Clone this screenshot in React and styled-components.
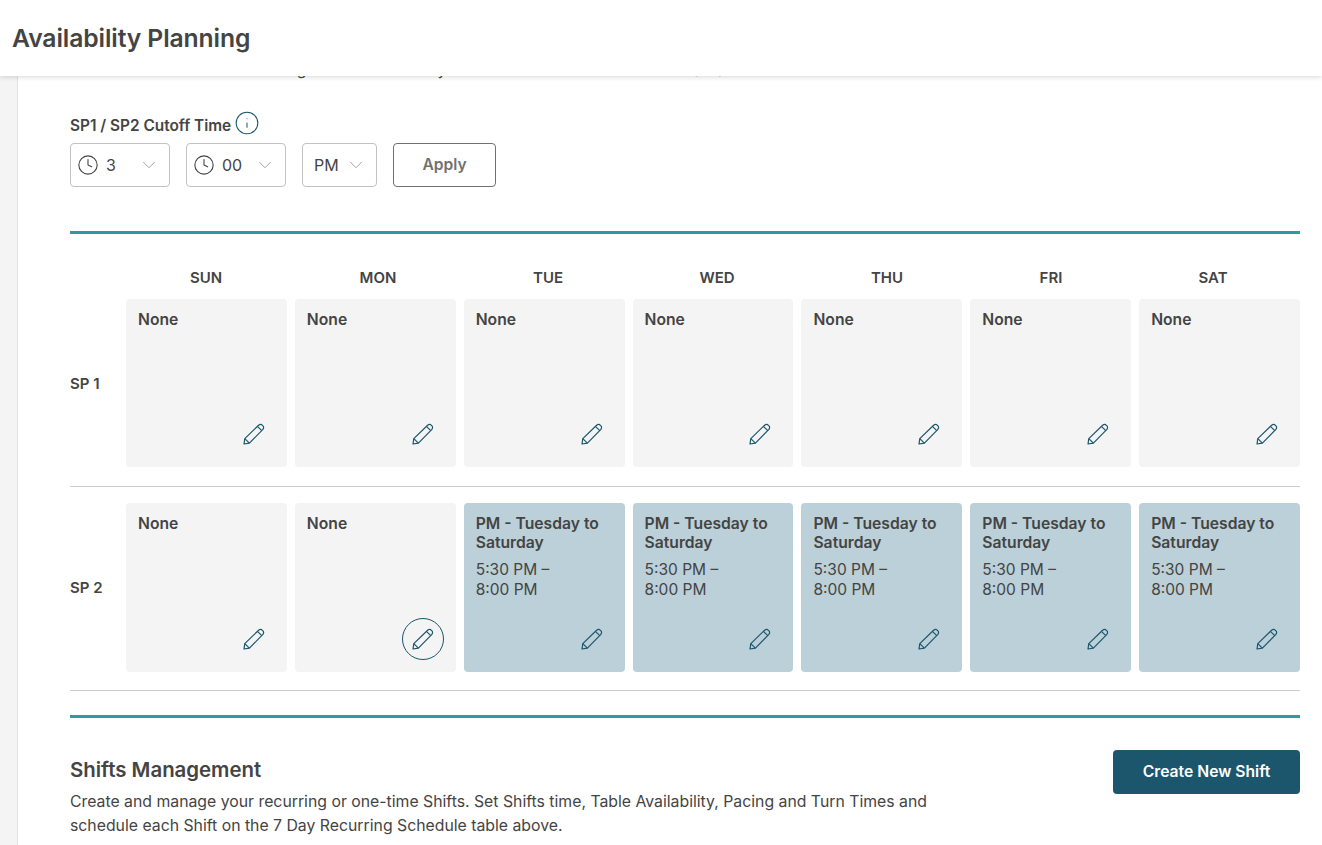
import React from "react"
import styled, { createGlobalStyle } from "styled-components"
import { Clock, ChevronDown, Info } from "lucide-react"

const colors = {
  text: "#444444",
  teal: "#2f9aa2",
  navy: "#1b566c",
  card: "#f4f4f4",
  shift: "#bbd0d8",
  line: "#cccccc",
}

const days = ["SUN", "MON", "TUE", "WED", "THU", "FRI", "SAT"]
const shift = { name: "PM - Tuesday to Saturday", time: "5:30 PM – 8:00 PM" }
const rows = [
  { label: "SP 1", cells: [null, null, null, null, null, null, null] },
  { label: "SP 2", cells: [null, null, shift, shift, shift, shift, shift], hovered: 1 },
]

const Pencil = () => (
  <svg width="22" height="22" viewBox="0 0 22 22" fill="none" stroke={colors.navy} strokeWidth="1.2" strokeLinejoin="round">
    <path d="M1 21 L1.8 15.6 L15.6 2.2 Q17.2 1 18.6 1.6 L20.4 3.4 Q21 5 19.9 6.4 L6.4 20.2 Z" />
    <path d="M14.4 3.4 L18.8 7.6" />
    <path d="M1.8 15.6 L6.4 20.2" />
  </svg>
)

const Select = ({ value, width, clock }) => (
  <SelectBox $width={width} $clock={clock}>
    {clock && <Clock size={22} strokeWidth={1.2} />}
    <SelectValue>{value}</SelectValue>
    <ChevronDown size={22} strokeWidth={1} color="#999999" />
  </SelectBox>
)

const App = () => (
  <Page>
    <GlobalStyle />
    <Header>
      <Title>Availability Planning</Title>
    </Header>
    <Rail />
    <Main>
      <Clipped>The time below sets the seating for this Availability and will shift to the next Service (SP)</Clipped>
      <CutoffLabel>
        SP1 / SP2 Cutoff Time
        <InfoIcon size={26} strokeWidth={0.95} color={colors.navy} />
      </CutoffLabel>
      <Controls>
        <Select value="3" width={100} clock />
        <Select value="00" width={100} clock />
        <Select value="PM" width={75} />
        <ApplyButton>Apply</ApplyButton>
      </Controls>
      <Schedule>
        <DayHeader>
          {days.map((day) => (
            <Day key={day}>{day}</Day>
          ))}
        </DayHeader>
        {rows.map((row) => (
          <Row key={row.label}>
            <RowLabel>{row.label}</RowLabel>
            {row.cells.map((cell, i) => (
              <Card key={i} $filled={!!cell}>
                <CardTitle>{cell ? cell.name : "None"}</CardTitle>
                {cell && <CardTime>{cell.time}</CardTime>}
                <EditButton $active={row.hovered === i}>
                  <Pencil />
                </EditButton>
              </Card>
            ))}
          </Row>
        ))}
      </Schedule>
      <Shifts>
        <ShiftsText>
          <ShiftsTitle>Shifts Management</ShiftsTitle>
          <ShiftsBody>
            Create and manage your recurring or one-time Shifts. Set Shifts time, Table Availability, Pacing and Turn Times and
            schedule each Shift on the 7 Day Recurring Schedule table above.
          </ShiftsBody>
        </ShiftsText>
        <CreateButton>Create New Shift</CreateButton>
      </Shifts>
    </Main>
  </Page>
)

const GlobalStyle = createGlobalStyle`
  html, body {
    margin: 0;
    height: 100%;
    overflow: hidden;
    background: #ffffff;
  }
  * {
    box-sizing: border-box;
  }
`

const Page = styled.div`
  display: flex;
  position: relative;
  height: 845px;
  overflow: hidden;
  font-family: Inter, "Liberation Sans", sans-serif;
  color: ${colors.text};
`

const Header = styled.div`
  position: absolute;
  top: 0;
  left: 0;
  right: 0;
  z-index: 2;
  height: 76px;
  padding: 0 0 1px 12px;
  display: flex;
  align-items: center;
  background: #ffffff;
  box-shadow: 0 1px 5px rgba(0, 0, 0, 0.16);
`

const Title = styled.h1`
  margin: 0;
  font-size: 24.7px;
  font-weight: 600;
  letter-spacing: -0.1px;
`

const Rail = styled.div`
  flex: 0 0 18px;
  background: ${colors.card};
  border-right: 1px solid #e2e2e2;
`

const Main = styled.div`
  flex: 1;
  min-width: 0;
  padding: 61px 22px 0 52px;
`

const Clipped = styled.div`
  font-size: 15.75px;
  line-height: 18px;
  white-space: nowrap;
`

const CutoffLabel = styled.div`
  display: flex;
  align-items: center;
  gap: 3px;
  margin-top: 33px;
  height: 26px;
  font-size: 15.4px;
  font-weight: 600;
`

const InfoIcon = styled(Info)`
  margin-bottom: 4px;
`

const Controls = styled.div`
  display: flex;
  gap: 16px;
  margin-top: 5px;
`

const SelectBox = styled.div`
  display: flex;
  align-items: center;
  width: ${(props) => props.$width}px;
  height: 44px;
  padding: 0 9px 1px ${(props) => (props.$clock ? 6 : 11)}px;
  gap: ${(props) => (props.$clock ? 7 : 0)}px;
  border: 1px solid #c2c2c2;
  border-radius: 4px;
  font-size: 16px;
`

const SelectValue = styled.span`
  flex: 1;
`

const ApplyButton = styled.button`
  width: 103px;
  height: 44px;
  padding: 0 0 2px;
  background: #ffffff;
  border: 1px solid #707070;
  border-radius: 4px;
  color: #707070;
  font: 600 15.6px Inter, "Liberation Sans", sans-serif;
`

const Schedule = styled.div`
  margin-top: 44px;
  border-top: 3px solid ${colors.teal};
  border-bottom: 3px solid ${colors.teal};
  padding-bottom: 24px;
`

const DayHeader = styled.div`
  display: grid;
  grid-template-columns: 160px 184px 156px 182px 158px 170px 154px;
  margin-left: 56px;
  padding-top: 33px;
  height: 65px;
`

const Day = styled.div`
  text-align: center;
  font-size: 15px;
  line-height: 21px;
  font-weight: 600;
`

const Row = styled.div`
  display: grid;
  grid-template-columns: 48px repeat(7, 1fr);
  column-gap: 8px;
  height: 188px;
  padding-bottom: 19px;
  border-bottom: 1px solid ${colors.line};

  & + & {
    height: 204px;
    padding-top: 16px;
    padding-bottom: 18px;
  }
`

const RowLabel = styled.div`
  align-self: center;
  font-size: 15px;
  font-weight: 600;
`

const Card = styled.div`
  display: flex;
  flex-direction: column;
  min-height: 0;
  padding: 11px 12px 12px;
  border-radius: 4px;
  background: ${(props) => (props.$filled ? colors.shift : colors.card)};
`

const CardTitle = styled.div`
  font-size: 15.7px;
  line-height: 19px;
  font-weight: 600;
`

const CardTime = styled.div`
  margin-top: 8px;
  font-size: 15.5px;
  line-height: 20px;
  max-width: 100px;
`

const EditButton = styled.div`
  display: flex;
  align-items: center;
  justify-content: center;
  width: 42px;
  height: 42px;
  margin-top: auto;
  align-self: flex-end;
  border-radius: 50%;
  border: 1px solid ${(props) => (props.$active ? colors.navy : "transparent")};
`

const Shifts = styled.div`
  display: flex;
  justify-content: space-between;
  align-items: flex-start;
  padding-top: 32px;
`

const ShiftsText = styled.div`
  width: 880px;
`

const ShiftsTitle = styled.h2`
  margin: 7px 0 0;
  font-size: 20.4px;
  line-height: 26px;
  font-weight: 600;
`

const ShiftsBody = styled.p`
  margin: 7px 0 0;
  font-size: 15.8px;
  line-height: 24px;
`

const CreateButton = styled.button`
  width: 187px;
  height: 44px;
  padding: 0 0 2px;
  background: ${colors.navy};
  border: none;
  border-radius: 4px;
  color: #ffffff;
  font: 600 15.7px Inter, "Liberation Sans", sans-serif;
`

export default App
